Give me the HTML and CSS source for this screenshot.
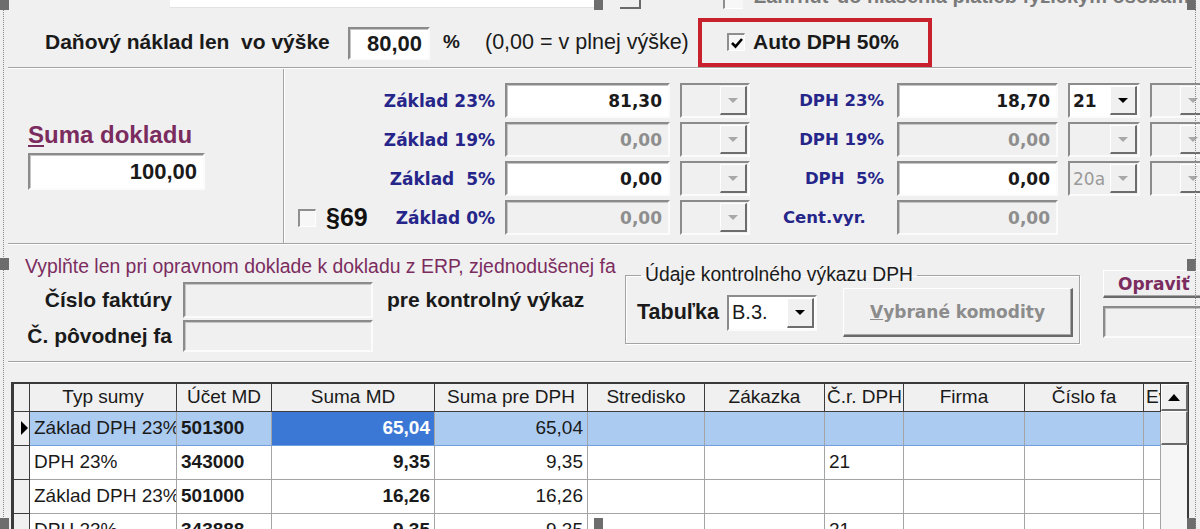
FILE: index.html
```html
<!DOCTYPE html>
<html lang="sk">

<head>
    <meta charset="UTF-8">
    <meta name="viewport" content="width=device-width, initial-scale=1.0">
    <title>Doklad - DPH</title>
    <link rel="stylesheet" href="styles.css">
</head>

<body>
    <div class="form">
        <!-- horny riadok (odrezany) -->
        <div class="cut-row">
            <div class="cut-input"></div>
            <div class="cut-btn"></div>
            <div class="cut-check"></div>
            <span class="cut-text">Zahrnúť do hlásenia platieb fyzickým osobám</span>
        </div>

        <div class="tax-row">
            <span class="tax-label">Daňový náklad len&nbsp; vo výške</span>
            <div class="edit tax-edit">80,00</div>
            <span class="pct">%</span>
            <span class="tax-note">(0,00 = v plnej výške)</span>
            <div class="auto-box">
                <span class="chk on">
                    <svg width="14" height="14" viewBox="0 0 14 14"><polyline points="2,7 5.5,10.5 12,3" fill="none" stroke="#000" stroke-width="2.6"/></svg>
                </span>
                <span class="auto-label">Auto DPH 50%</span>
            </div>
        </div>
        <div class="sep"></div>

        <!-- sumy a sadzby -->
        <div class="amounts">
            <div class="sum-panel">
                <div class="sum-label"><u>S</u>uma dokladu</div>
                <div class="edit sum-edit">100,00</div>
            </div>
            <div class="rates">
                <div class="lbl">Základ 23%</div>
                <div class="edit val">81,30</div>
                <div class="combo"><span class="cv"></span><span class="cb"><i class="arr"></i></span></div>
                <div class="lbl lbl2">DPH 23%</div>
                <div class="edit val">18,70</div>
                <div class="combo on"><span class="cv">21</span><span class="cb"><i class="arr"></i></span></div>
                <div class="combo"><span class="cv"></span><span class="cb"><i class="arr"></i></span></div>

                <div class="lbl">Základ 19%</div>
                <div class="edit val off">0,00</div>
                <div class="combo"><span class="cv"></span><span class="cb"><i class="arr"></i></span></div>
                <div class="lbl lbl2">DPH 19%</div>
                <div class="edit val off">0,00</div>
                <div class="combo"><span class="cv"></span><span class="cb"><i class="arr"></i></span></div>
                <div class="combo"><span class="cv"></span><span class="cb"><i class="arr"></i></span></div>

                <div class="lbl">Základ&nbsp; 5%</div>
                <div class="edit val">0,00</div>
                <div class="combo"><span class="cv"></span><span class="cb"><i class="arr"></i></span></div>
                <div class="lbl lbl2">DPH&nbsp; 5%</div>
                <div class="edit val">0,00</div>
                <div class="combo"><span class="cv grey">20a</span><span class="cb"><i class="arr"></i></span></div>
                <div class="combo"><span class="cv"></span><span class="cb"><i class="arr"></i></span></div>

                <div class="lbl p69">
                    <span class="p69-box"><span class="chk"></span><span class="p69-text">§69</span></span>
                    <span>Základ 0%</span>
                </div>
                <div class="edit val off">0,00</div>
                <div class="combo"><span class="cv"></span><span class="cb"><i class="arr"></i></span></div>
                <div class="lbl lbl2 cent">Cent.vyr.</div>
                <div class="edit val off">0,00</div>
            </div>
        </div>
        <div class="sep"></div>

        <!-- opravny doklad -->
        <div class="corr">
            <div class="corr-left">
                <div class="note">Vyplňte len pri opravnom doklade k dokladu z ERP, zjednodušenej fa</div>
                <div class="fields">
                    <span class="fl">Číslo faktúry</span>
                    <div class="edit off"></div>
                    <span class="fl fl-note">pre kontrolný výkaz</span>
                    <span class="fl">Č. pôvodnej fa</span>
                    <div class="edit off"></div>
                </div>
            </div>
            <fieldset class="group">
                <legend>Údaje kontrolného výkazu DPH</legend>
                <div class="group-row">
                    <span class="tab-label">Tabuľka</span>
                    <div class="combo on tab-combo"><span class="cv">B.3.</span><span class="cb"><i class="arr"></i></span></div>
                    <div class="btn komod"><span><u>V</u>ybrané komodity</span></div>
                </div>
            </fieldset>
            <div class="corr-right">
                <div class="btn opravit">Opraviť</div>
                <div class="edit off opr-edit"></div>
            </div>
        </div>
        <div class="sep"></div>

        <!-- mriezka rozuctovania -->
        <div class="grid">
            <table>
                <colgroup>
                    <col style="width:16px">
                    <col style="width:147px">
                    <col style="width:95px">
                    <col style="width:163px">
                    <col style="width:153px">
                    <col style="width:117px">
                    <col style="width:120px">
                    <col style="width:79px">
                    <col style="width:121px">
                    <col style="width:119px">
                    <col style="width:17px">
                </colgroup>
                <thead>
                    <tr>
                        <th></th>
                        <th>Typ sumy</th>
                        <th>Účet MD</th>
                        <th>Suma MD</th>
                        <th>Suma pre DPH</th>
                        <th>Stredisko</th>
                        <th>Zákazka</th>
                        <th class="left">Č.r. DPH</th>
                        <th>Firma</th>
                        <th>Číslo fa</th>
                        <th class="left">Ev</th>
                    </tr>
                </thead>
                <tbody>
                    <tr class="sel">
                        <td class="ind"><i class="pointer"></i></td>
                        <td>Základ DPH 23%</td>
                        <td class="b">501300</td>
                        <td class="num b hot">65,04</td>
                        <td class="num">65,04</td>
                        <td></td>
                        <td></td>
                        <td></td>
                        <td></td>
                        <td></td>
                        <td></td>
                    </tr>
                    <tr>
                        <td class="ind"></td>
                        <td>DPH 23%</td>
                        <td class="b">343000</td>
                        <td class="num b">9,35</td>
                        <td class="num">9,35</td>
                        <td></td>
                        <td></td>
                        <td>21</td>
                        <td></td>
                        <td></td>
                        <td></td>
                    </tr>
                    <tr>
                        <td class="ind"></td>
                        <td>Základ DPH 23%</td>
                        <td class="b">501000</td>
                        <td class="num b">16,26</td>
                        <td class="num">16,26</td>
                        <td></td>
                        <td></td>
                        <td></td>
                        <td></td>
                        <td></td>
                        <td></td>
                    </tr>
                    <tr>
                        <td class="ind"></td>
                        <td>DPH 23%</td>
                        <td class="b">343888</td>
                        <td class="num b">9,35</td>
                        <td class="num">9,35</td>
                        <td></td>
                        <td></td>
                        <td>21</td>
                        <td></td>
                        <td></td>
                        <td></td>
                    </tr>
                </tbody>
            </table>
            <div class="vscroll">
                <div class="sb-up"><i class="up"></i></div>
                <div class="sb-thumb"></div>
            </div>
        </div>

        <!-- vyberove body (designer) -->
        <span class="handle h-tl"></span>
        <span class="handle h-tm"></span>
        <span class="handle h-tr"></span>
        <span class="handle h-ml"></span>
        <span class="handle h-mr"></span>
        <span class="handle h-bl"></span>
        <span class="handle h-bm"></span>
        <span class="handle h-br"></span>
    </div>
</body>

</html>
```

FILE: styles.css
```css
* {
    margin: 0;
    padding: 0;
    box-sizing: border-box;
}

body {
    width: 1200px;
    height: 529px;
    overflow: hidden;
    background-color: #f0f0f0;
    font-family: "Liberation Sans", Arial, sans-serif;
    color: #1a1a1a;
}

.form {
    position: relative;
    width: 1200px;
    height: 529px;
    overflow: hidden;
}

/* bodkovany ramik vyberu */
.form::before,
.form::after {
    content: "";
    position: absolute;
    top: 0;
    bottom: 0;
    border-left: 1px dotted #8a8a8a;
}

.form::before {
    left: 3px;
}

.form::after {
    left: 1195px;
}

.handle {
    position: absolute;
    width: 9px;
    height: 12px;
    background-color: #6d6d6d;
}

.h-tl { left: 0; top: -2px; }
.h-tm { left: 594px; top: -2px; }
.h-tr { left: 1187px; top: -2px; }
.h-ml { left: 0; top: 258px; }
.h-mr { left: 1187px; top: 259px; }
.h-bl { left: 0; top: 518px; }
.h-bm { left: 594px; top: 518px; }
.h-br { left: 1187px; top: 518px; }

.sep {
    height: 2px;
    margin: 0 8px;
    border-top: 1px solid #a3a3a3;
    border-bottom: 1px solid #fff;
}

/* spolocne prvky */
.edit {
    display: flex;
    align-items: center;
    justify-content: flex-end;
    padding: 0 6px;
    background-color: #fff;
    border-style: solid;
    border-width: 2px;
    border-color: #8b8b8b #fbfbfb #fbfbfb #8b8b8b;
    box-shadow: inset 1px 1px 0 #c6c6c6;
    font-family: "DejaVu Sans", sans-serif;
    font-weight: bold;
    font-size: 17px;
}

.edit.off {
    background-color: #f0f0f0;
    color: #8e8e8e;
}

.chk {
    display: inline-flex;
    align-items: center;
    justify-content: center;
    width: 18px;
    height: 18px;
    background-color: #f7f7f7;
    border-style: solid;
    border-width: 2px 1px 1px 2px;
    border-color: #8e8e8e #fff #fff #8e8e8e;
}

.combo {
    display: flex;
    background-color: #f0f0f0;
    border-style: solid;
    border-width: 2px;
    border-color: #8b8b8b #fbfbfb #fbfbfb #8b8b8b;
}

.combo.on {
    background-color: #fff;
}

.combo .cv {
    flex: 1;
    overflow: hidden;
    display: flex;
    align-items: center;
    padding-left: 3px;
    font-family: "DejaVu Sans", sans-serif;
    font-weight: bold;
    font-size: 17px;
    white-space: nowrap;
}

.combo .cv.grey {
    color: #9a9a9a;
    font-weight: normal;
}

.combo .cb {
    width: 27px;
    flex-shrink: 0;
    display: flex;
    align-items: center;
    justify-content: center;
    background-color: #f0f0f0;
    border-style: solid;
    border-width: 1px 2px 2px 1px;
    border-color: #fff #6d6d6d #6d6d6d #fff;
    margin: 1px 1px 1px 0;
}

.arr {
    width: 0;
    height: 0;
    border-left: 5px solid transparent;
    border-right: 5px solid transparent;
    border-top: 5px solid #a8a8a8;
}

.combo.on .arr {
    border-top-color: #000;
}

.btn {
    display: flex;
    align-items: center;
    background-color: #f0f0f0;
    border-style: solid;
    border-width: 1px 2px 2px 1px;
    border-color: #fff #6a6a6a #6a6a6a #fff;
    box-shadow: inset -1px -1px 0 #a8a8a8;
    font-family: "DejaVu Sans", sans-serif;
    font-weight: bold;
    font-size: 17px;
}

/* horny odrezany riadok */
.cut-row {
    height: 17px;
    display: flex;
    align-items: flex-start;
    overflow: hidden;
}

.cut-row > * {
    flex-shrink: 0;
}

.cut-input {
    margin-left: 170px;
    width: 427px;
    height: 8px;
    background-color: #fff;
    border-bottom: 1px solid #e2e2e2;
}

.cut-btn {
    margin-left: 23px;
    width: 21px;
    height: 9px;
    border-right: 2px solid #6a6a6a;
    border-bottom: 2px solid #6a6a6a;
}

.cut-check {
    margin-left: 82px;
    width: 20px;
    height: 9px;
    background-color: #f7f7f7;
    border-left: 2px solid #8e8e8e;
    border-bottom: 1px solid #fff;
}

.cut-text {
    margin: -15px 0 0 11px;
    line-height: 22px;
    font-weight: bold;
    font-size: 20px;
    color: #7a7a7a;
    white-space: nowrap;
}

/* danovy naklad */
.tax-row {
    height: 50px;
    display: flex;
    align-items: center;
}

.tax-row > * {
    flex-shrink: 0;
}

.tax-label {
    margin-left: 45px;
    width: 303px;
    font-weight: bold;
    font-size: 21px;
    white-space: nowrap;
}

.tax-edit {
    width: 82px;
    height: 33px;
    margin-top: 3px;
    font-family: "Liberation Sans", sans-serif;
    font-size: 22px;
}

.pct {
    margin-left: 13px;
    width: 42px;
    font-weight: bold;
    font-size: 19px;
}

.tax-note {
    width: 213px;
    font-size: 21.5px;
    white-space: nowrap;
}

.auto-box {
    width: 234px;
    height: 49px;
    border: 4px solid #c8202c;
    display: flex;
    align-items: center;
    padding-left: 25px;
}

.auto-label {
    margin-left: 8px;
    font-weight: bold;
    font-size: 21px;
    white-space: nowrap;
}

/* suma dokladu + zaklady */
.amounts {
    display: flex;
    height: 174px;
    margin-left: 8px;
}

.sum-panel {
    flex-shrink: 0;
    width: 276px;
    padding: 52px 0 0 20px;
    border-right: 1px solid #a3a3a3;
    box-shadow: 1px 0 0 #fff;
}

.sum-label {
    line-height: 28px;
    font-weight: bold;
    font-size: 24px;
    color: #7b2c5f;
}

.sum-edit {
    margin-top: 4px;
    width: 177px;
    height: 37px;
    font-family: "Liberation Sans", sans-serif;
    font-size: 22px;
}

.rates {
    flex-shrink: 0;
    margin-left: 1px;
    padding-top: 14px;
    display: grid;
    grid-template-columns: 210px 165px 70px 127px 161px 72px 60px;
    grid-auto-rows: 35px;
    column-gap: 10px;
    row-gap: 4px;
}

.lbl {
    display: flex;
    align-items: center;
    justify-content: flex-end;
    font-family: "DejaVu Sans", sans-serif;
    font-weight: bold;
    font-size: 17px;
    color: #26268a;
    white-space: nowrap;
}

.lbl2 {
    padding-right: 3px;
    font-size: 16.5px;
}

.lbl.cent {
    justify-content: flex-start;
    padding-left: 23px;
}

.lbl.p69 {
    justify-content: space-between;
}

.p69-box {
    display: flex;
    align-items: center;
    margin-left: 13px;
}

.p69-text {
    margin-left: 10px;
    font-family: "Liberation Sans", sans-serif;
    font-size: 25px;
    color: #111;
}

/* opravny doklad */
.corr {
    display: flex;
    height: 116px;
    margin-left: 8px;
}

.corr > * {
    flex-shrink: 0;
}

.corr-left {
    width: 612px;
    padding: 10px 0 0 17px;
}

.note {
    line-height: 22px;
    font-size: 19.4px;
    color: #7b2c5f;
    white-space: nowrap;
}

.fields {
    margin-top: 5px;
    display: grid;
    grid-template-columns: 147px 190px auto;
    grid-template-rows: 36px 32px;
    column-gap: 11px;
    row-gap: 2px;
}

.fl {
    display: flex;
    align-items: center;
    justify-content: flex-end;
    font-weight: bold;
    font-size: 21px;
    white-space: nowrap;
}

.fl-note {
    justify-content: flex-start;
    margin-left: 3px;
}

.group {
    margin: 17px 0 0 5px;
    width: 455px;
    height: 82px;
    border: 1px solid #a3a3a3;
    box-shadow: inset 1px 1px 0 #fff, 1px 1px 0 #fff;
    padding: 0 6px 0 11px;
}

.group legend {
    margin-left: 4px;
    padding: 0 4px;
    line-height: 26px;
    font-size: 19.3px;
}

.group-row {
    height: 49px;
    display: flex;
    align-items: center;
}

.group-row > * {
    flex-shrink: 0;
}

.tab-label {
    width: 90px;
    font-weight: bold;
    font-size: 21.5px;
}

.tab-combo {
    width: 90px;
    height: 36px;
}

.tab-combo .cv {
    font-family: "Liberation Sans", sans-serif;
    font-weight: normal;
    font-size: 20px;
}

.komod {
    margin-left: 26px;
    width: 230px;
    height: 49px;
    justify-content: center;
    color: #8c8c8c;
}

.corr-right {
    margin-left: 23px;
    width: 100px;
    padding-top: 25px;
}

.opravit {
    height: 28px;
    padding-left: 14px;
    color: #7b2c5f;
    border-right: none;
}

.opr-edit {
    margin-top: 8px;
    height: 32px;
    border-right: none;
}

/* mriezka */
.grid {
    margin: 19px 0 0 11px;
    width: 1178px;
    height: 160px;
    display: flex;
    align-items: flex-start;
    border: 2px solid #3a3a3a;
    border-bottom: none;
    background-color: #f6f6f6;
}

table {
    flex-shrink: 0;
    width: 1147px;
    table-layout: fixed;
    border-collapse: collapse;
    font-size: 19px;
}

th {
    height: 27px;
    font-weight: normal;
    background-color: #f0f0f0;
    border: 1px solid #3c3c3c;
    border-top: none;
    white-space: nowrap;
    overflow: hidden;
}

th.left {
    text-align: left;
    padding-left: 2px;
}

td {
    height: 34px;
    padding: 0 4px;
    background-color: #fff;
    border-right: 1px solid #a4a4a4;
    border-bottom: 1px solid #a4a4a4;
    white-space: nowrap;
    overflow: hidden;
}

td.ind {
    padding: 0;
    background-color: #f0f0f0;
    border: 1px solid #3c3c3c;
}

td.num {
    text-align: right;
}

td.b {
    font-weight: bold;
}

tr.sel td {
    background-color: #abcbf0;
    border-top: 1px solid #6f9fdc;
    border-bottom: 1px solid #6f9fdc;
}

tr.sel td.ind {
    background-color: #f0f0f0;
    border-color: #3c3c3c;
}

tr.sel td.hot {
    background-color: #3b78d6;
    color: #fff;
}

.pointer {
    display: block;
    width: 0;
    height: 0;
    margin-left: 7px;
    border-top: 7px solid transparent;
    border-bottom: 7px solid transparent;
    border-left: 7px solid #000;
}

.vscroll {
    flex-shrink: 0;
    width: 27px;
    display: flex;
    flex-direction: column;
}

.sb-up,
.sb-thumb {
    background-color: #f0f0f0;
    border-style: solid;
    border-width: 1px 2px 2px 1px;
    border-color: #fff #6a6a6a #6a6a6a #fff;
}

.sb-up {
    height: 27px;
    display: flex;
    align-items: center;
    justify-content: center;
}

.sb-thumb {
    height: 34px;
}

.up {
    width: 0;
    height: 0;
    border-left: 6px solid transparent;
    border-right: 6px solid transparent;
    border-bottom: 7px solid #000;
}
```
